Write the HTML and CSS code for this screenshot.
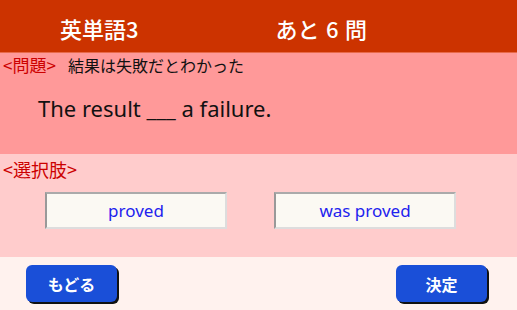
FILE: index.html
```html
<!DOCTYPE html>
<html lang="ja">
<head>
<meta charset="utf-8">
<link rel="stylesheet" href="styles.css">
</head>
<body>
<div class="app">
  <header class="topbar">
    <span class="title">英単語3</span>
    <span class="remain">あと 6 問</span>
  </header>
  <section class="problem">
    <div class="prob-head">
      <span class="label">&lt;問題&gt;</span>
      <span class="meaning">結果は失敗だとわかった</span>
    </div>
    <p class="sentence">The result ___ a failure.</p>
  </section>
  <section class="choices">
    <div class="label">&lt;選択肢&gt;</div>
    <div class="choice-row">
      <div class="choice">proved</div>
      <div class="choice">was proved</div>
    </div>
  </section>
  <footer class="actions">
    <button class="btn">もどる</button>
    <button class="btn">決定</button>
  </footer>
</div>
</body>
</html>
```
FILE: styles.css
```css
html, body {
  margin: 0;
  padding: 0;
}
body {
  font-family: "Noto Sans", "Noto Sans CJK JP", sans-serif;
  background: #fff2ee;
}
.app {
  width: 517px;
  height: 310px;
  display: flex;
  flex-direction: column;
}
.topbar {
  background: #cc3300;
  border-bottom: 1px solid #e86a4a;
  display: flex;
  align-items: center;
  padding-left: 60px;
  padding-top: 4px;
  height: 48px;
  color: #fff;
  font-size: 22px;
  font-weight: 500;
  font-family: "Noto Sans CJK JP", "Noto Sans", sans-serif;
}
.remain {
  margin-left: 137px;
  word-spacing: 1.5px;
}
.problem {
  height: 101px;
  background: #ff9999;
}
.prob-head {
  display: flex;
  align-items: baseline;
  gap: 12px;
  padding-left: 3px;
  padding-top: 2px;
  line-height: 20px;
}
.label {
  color: #cc0000;
  font-size: 17px;
  font-family: "Noto Sans CJK JP", sans-serif;
}
.meaning {
  color: #111;
  font-size: 16px;
  font-family: "Noto Sans CJK JP", sans-serif;
}
.sentence {
  margin: 0;
  padding: 18px 0 0 38px;
  font-size: 22px;
  line-height: 30px;
  color: #111;
}
.choices {
  height: 103px;
  background: #ffcccc;
}
.choices .label {
  padding: 4px 0 0 3px;
  line-height: 22px;
  font-size: 18px;
}
.choice-row {
  display: flex;
  gap: 47px;
  padding: 12px 0 0 45px;
}
.choice {
  width: 178px;
  height: 33px;
  background: #fbf9f3;
  border-style: solid;
  border-width: 2px;
  border-color: #aaaaaa #dddddd #dddddd #999999;
  display: flex;
  align-items: center;
  justify-content: center;
  color: #2222ee;
  font-size: 17px;
}
.actions {
  flex: 1;
  display: flex;
  justify-content: space-between;
  align-items: flex-start;
  padding: 8px 30px 0 26px;
}
.btn {
  width: 91px;
  height: 37px;
  border: none;
  border-radius: 6px;
  background: #1a4fd8;
  color: #fff;
  font-size: 16px;
  font-weight: bold;
  font-family: "Noto Sans CJK JP", sans-serif;
  box-shadow: 2px 2px 0 #111;
  padding: 0;
}
```
